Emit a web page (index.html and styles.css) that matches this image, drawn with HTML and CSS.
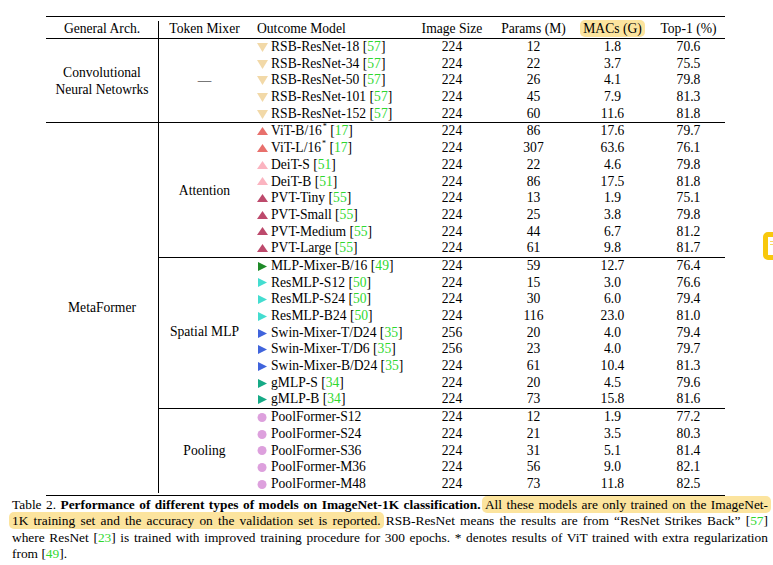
FILE: index.html
```html
<!DOCTYPE html>
<html>
<head>
<meta charset="utf-8">
<link rel="stylesheet" href="styles.css">
</head>
<body>
<div class="tbl">
  <div class="grid">
    <div class="h c1">General Arch.</div>
    <div class="h">Token Mixer</div>
    <div class="h model">Outcome Model</div>
    <div class="h">Image Size</div>
    <div class="h">Params (M)</div>
    <div class="h"><span class="hl">MACs (G)</span></div>
    <div class="h t1">Top-1 (%)</div>

    <div class="rule r1"></div>
    <div class="cat c1 cnn1">Convolutional<br>Neural Netowrks</div>
    <div class="cat cnn2">—</div>
    <div class="rule r2"></div>
    <div class="cat c1 meta">MetaFormer</div>
    <div class="cat att">Attention</div>
    <div class="rule r3"></div>
    <div class="cat smlp">Spatial MLP</div>
    <div class="rule r4"></div>
    <div class="cat pool">Pooling</div>

    <div class="m"><svg class="ic" viewBox="0 0 11 9"><path d="M0 0H11L5.5 9Z" class="f-rsb"/></svg><span>RSB-ResNet-18 [<span class="cite">57</span>]</span></div><div class="n">224</div><div class="n">12</div><div class="n">1.8</div><div class="n t1">70.6</div>
    <div class="m"><svg class="ic" viewBox="0 0 11 9"><path d="M0 0H11L5.5 9Z" class="f-rsb"/></svg><span>RSB-ResNet-34 [<span class="cite">57</span>]</span></div><div class="n">224</div><div class="n">22</div><div class="n">3.7</div><div class="n t1">75.5</div>
    <div class="m"><svg class="ic" viewBox="0 0 11 9"><path d="M0 0H11L5.5 9Z" class="f-rsb"/></svg><span>RSB-ResNet-50 [<span class="cite">57</span>]</span></div><div class="n">224</div><div class="n">26</div><div class="n">4.1</div><div class="n t1">79.8</div>
    <div class="m"><svg class="ic" viewBox="0 0 11 9"><path d="M0 0H11L5.5 9Z" class="f-rsb"/></svg><span>RSB-ResNet-101 [<span class="cite">57</span>]</span></div><div class="n">224</div><div class="n">45</div><div class="n">7.9</div><div class="n t1">81.3</div>
    <div class="m"><svg class="ic" viewBox="0 0 11 9"><path d="M0 0H11L5.5 9Z" class="f-rsb"/></svg><span>RSB-ResNet-152 [<span class="cite">57</span>]</span></div><div class="n">224</div><div class="n">60</div><div class="n">11.6</div><div class="n t1">81.8</div>

    <div class="m"><svg class="ic" viewBox="0 0 11 9"><path d="M5.5 0L11 8H0Z" class="f-vit"/></svg><span>ViT-B/16<sup>*</sup> [<span class="cite">17</span>]</span></div><div class="n">224</div><div class="n">86</div><div class="n">17.6</div><div class="n t1">79.7</div>
    <div class="m"><svg class="ic" viewBox="0 0 11 9"><path d="M5.5 0L11 8H0Z" class="f-vit"/></svg><span>ViT-L/16<sup>*</sup> [<span class="cite">17</span>]</span></div><div class="n">224</div><div class="n">307</div><div class="n">63.6</div><div class="n t1">76.1</div>
    <div class="m"><svg class="ic" viewBox="0 0 11 9"><path d="M5.5 0L11 8H0Z" class="f-deit"/></svg><span>DeiT-S [<span class="cite">51</span>]</span></div><div class="n">224</div><div class="n">22</div><div class="n">4.6</div><div class="n t1">79.8</div>
    <div class="m"><svg class="ic" viewBox="0 0 11 9"><path d="M5.5 0L11 8H0Z" class="f-deit"/></svg><span>DeiT-B [<span class="cite">51</span>]</span></div><div class="n">224</div><div class="n">86</div><div class="n">17.5</div><div class="n t1">81.8</div>
    <div class="m"><svg class="ic" viewBox="0 0 11 9"><path d="M5.5 0L11 8H0Z" class="f-pvt"/></svg><span>PVT-Tiny [<span class="cite">55</span>]</span></div><div class="n">224</div><div class="n">13</div><div class="n">1.9</div><div class="n t1">75.1</div>
    <div class="m"><svg class="ic" viewBox="0 0 11 9"><path d="M5.5 0L11 8H0Z" class="f-pvt"/></svg><span>PVT-Small [<span class="cite">55</span>]</span></div><div class="n">224</div><div class="n">25</div><div class="n">3.8</div><div class="n t1">79.8</div>
    <div class="m"><svg class="ic" viewBox="0 0 11 9"><path d="M5.5 0L11 8H0Z" class="f-pvt"/></svg><span>PVT-Medium [<span class="cite">55</span>]</span></div><div class="n">224</div><div class="n">44</div><div class="n">6.7</div><div class="n t1">81.2</div>
    <div class="m"><svg class="ic" viewBox="0 0 11 9"><path d="M5.5 0L11 8H0Z" class="f-pvt"/></svg><span>PVT-Large [<span class="cite">55</span>]</span></div><div class="n">224</div><div class="n">61</div><div class="n">9.8</div><div class="n t1">81.7</div>

    <div class="m"><svg class="ic" viewBox="0 0 11 9"><path d="M1 0L10 4.5L1 9Z" class="f-mixer"/></svg><span>MLP-Mixer-B/16 [<span class="cite">49</span>]</span></div><div class="n">224</div><div class="n">59</div><div class="n">12.7</div><div class="n t1">76.4</div>
    <div class="m"><svg class="ic" viewBox="0 0 11 9"><path d="M1 0L10 4.5L1 9Z" class="f-resmlp"/></svg><span>ResMLP-S12 [<span class="cite">50</span>]</span></div><div class="n">224</div><div class="n">15</div><div class="n">3.0</div><div class="n t1">76.6</div>
    <div class="m"><svg class="ic" viewBox="0 0 11 9"><path d="M1 0L10 4.5L1 9Z" class="f-resmlp"/></svg><span>ResMLP-S24 [<span class="cite">50</span>]</span></div><div class="n">224</div><div class="n">30</div><div class="n">6.0</div><div class="n t1">79.4</div>
    <div class="m"><svg class="ic" viewBox="0 0 11 9"><path d="M1 0L10 4.5L1 9Z" class="f-resmlp"/></svg><span>ResMLP-B24 [<span class="cite">50</span>]</span></div><div class="n">224</div><div class="n">116</div><div class="n">23.0</div><div class="n t1">81.0</div>
    <div class="m"><svg class="ic" viewBox="0 0 11 9"><path d="M1 0L10 4.5L1 9Z" class="f-swin"/></svg><span>Swin-Mixer-T/D24 [<span class="cite">35</span>]</span></div><div class="n">256</div><div class="n">20</div><div class="n">4.0</div><div class="n t1">79.4</div>
    <div class="m"><svg class="ic" viewBox="0 0 11 9"><path d="M1 0L10 4.5L1 9Z" class="f-swin"/></svg><span>Swin-Mixer-T/D6 [<span class="cite">35</span>]</span></div><div class="n">256</div><div class="n">23</div><div class="n">4.0</div><div class="n t1">79.7</div>
    <div class="m"><svg class="ic" viewBox="0 0 11 9"><path d="M1 0L10 4.5L1 9Z" class="f-swin"/></svg><span>Swin-Mixer-B/D24 [<span class="cite">35</span>]</span></div><div class="n">224</div><div class="n">61</div><div class="n">10.4</div><div class="n t1">81.3</div>
    <div class="m"><svg class="ic" viewBox="0 0 11 9"><path d="M1 0L10 4.5L1 9Z" class="f-gmlp"/></svg><span>gMLP-S [<span class="cite">34</span>]</span></div><div class="n">224</div><div class="n">20</div><div class="n">4.5</div><div class="n t1">79.6</div>
    <div class="m"><svg class="ic" viewBox="0 0 11 9"><path d="M1 0L10 4.5L1 9Z" class="f-gmlp"/></svg><span>gMLP-B [<span class="cite">34</span>]</span></div><div class="n">224</div><div class="n">73</div><div class="n">15.8</div><div class="n t1">81.6</div>

    <div class="m"><svg class="ic" viewBox="0 0 11 10"><circle cx="5" cy="5" r="5" class="f-pool"/></svg><span>PoolFormer-S12</span></div><div class="n">224</div><div class="n">12</div><div class="n">1.9</div><div class="n t1">77.2</div>
    <div class="m"><svg class="ic" viewBox="0 0 11 10"><circle cx="5" cy="5" r="5" class="f-pool"/></svg><span>PoolFormer-S24</span></div><div class="n">224</div><div class="n">21</div><div class="n">3.5</div><div class="n t1">80.3</div>
    <div class="m"><svg class="ic" viewBox="0 0 11 10"><circle cx="5" cy="5" r="5" class="f-pool"/></svg><span>PoolFormer-S36</span></div><div class="n">224</div><div class="n">31</div><div class="n">5.1</div><div class="n t1">81.4</div>
    <div class="m"><svg class="ic" viewBox="0 0 11 10"><circle cx="5" cy="5" r="5" class="f-pool"/></svg><span>PoolFormer-M36</span></div><div class="n">224</div><div class="n">56</div><div class="n">9.0</div><div class="n t1">82.1</div>
    <div class="m"><svg class="ic" viewBox="0 0 11 10"><circle cx="5" cy="5" r="5" class="f-pool"/></svg><span>PoolFormer-M48</span></div><div class="n">224</div><div class="n">73</div><div class="n">11.8</div><div class="n t1">82.5</div>
  </div>
</div>

<div class="caption">
  <div class="ln">Table 2. <b>Performance of different types of models on ImageNet-1K classification.</b> <span class="hl">All these models are only trained on the ImageNet-</span></div>
  <div class="ln"><span class="hl">1K training set and the accuracy on the validation set is reported.</span> RSB-ResNet means the results are from “ResNet Strikes Back” [<span class="cite">57</span>]</div>
  <div class="ln">where ResNet [<span class="cite">23</span>] is trained with improved training procedure for 300 epochs. * denotes results of ViT trained with extra regularization</div>
  <div class="last">from [<span class="cite">49</span>].</div>
</div>

<div class="widget"><span class="wl"></span><span class="wl"></span></div>
</body>
</html>
```

FILE: styles.css
```css
html, body {
  margin: 0;
  padding: 0;
  background: #fff;
}
body {
  font-family: "Liberation Serif", "Times New Roman", serif;
  color: #000;
  width: 773px;
  height: 565px;
  overflow: hidden;
}
.tbl {
  margin: 16px 0 0 46px;
  width: 679px;
  border-top: 1px solid #000;
  border-bottom: 1px solid #000;
  padding: 4px 0 2px;
}
.grid {
  display: grid;
  grid-template-columns: 113px 91px 165px 74px 89px 69px 78px;
  grid-template-rows: 17px 1px repeat(5, 16.7px) 1px repeat(8, 16.7px) 1px repeat(9, 16.7px) 1px repeat(5, 16.7px);
  font-size: 13.6px;
  line-height: 16.7px;
}
.h {
  text-align: center;
  line-height: 15px;
  white-space: nowrap;
}
.h.model {
  text-align: left;
  padding-left: 7px;
}
.c1 {
  border-right: 1px solid #000;
}
.t1 {
  padding-left: 5px;
}
.rule {
  background: #000;
}
.r1 { grid-row: 2; grid-column: 1 / -1; }
.r2 { grid-row: 8; grid-column: 1 / -1; }
.r3 { grid-row: 17; grid-column: 2 / -1; }
.r4 { grid-row: 27; grid-column: 2 / -1; }
.cnn1 { grid-row: 3 / 8; grid-column: 1; }
.cnn2 { grid-row: 3 / 8; grid-column: 2; }
.meta { grid-row: 9 / 33; grid-column: 1; padding-bottom: 2px; }
.att { grid-row: 9 / 17; grid-column: 2; }
.smlp { grid-row: 18 / 27; grid-column: 2; padding-bottom: 3px; }
.pool { grid-row: 28 / 33; grid-column: 2; }
.cat {
  display: flex;
  align-items: center;
  justify-content: center;
  text-align: center;
  line-height: 17px;
}
.m {
  display: flex;
  align-items: center;
  padding-left: 7px;
  white-space: nowrap;
}
.ic {
  width: 11px;
  height: 9px;
  margin-right: 3px;
  flex: none;
}
.m sup {
  font-size: 8px;
  line-height: 0;
  position: relative;
  top: -1px;
  margin-left: 1px;
}
.n {
  text-align: center;
}
.cite {
  color: #2fd82f;
}
.f-rsb { fill: #f2d9a8; }
.f-vit { fill: #e8706c; }
.f-deit { fill: #fbb4c0; }
.f-pvt { fill: #bd4a6c; }
.f-mixer { fill: #1e8a28; }
.f-resmlp { fill: #44ddd0; }
.f-swin { fill: #4064dc; }
.f-gmlp { fill: #16aa86; }
.f-pool { fill: #dda0dd; }
.hl {
  background: #fce49e;
  border-radius: 5px;
  padding: 1px 3px;
  margin: 0 -3px;
}
.caption {
  margin: 1px 0 0 12px;
  width: 756px;
  font-size: 13.4px;
  line-height: 16.6px;
}
.ln {
  text-align: justify;
  text-align-last: justify;
  word-spacing: -1px;
}
.widget {
  position: absolute;
  left: 763px;
  top: 232px;
  width: 12px;
  height: 14px;
  border: 5px solid #f8c80c;
  border-radius: 5px;
  background: #fff;
  padding: 4px 0 0 2px;
  box-sizing: content-box;
}
.wl {
  display: block;
  width: 6px;
  height: 1px;
  background: #f8d860;
  margin-bottom: 2px;
}
```
